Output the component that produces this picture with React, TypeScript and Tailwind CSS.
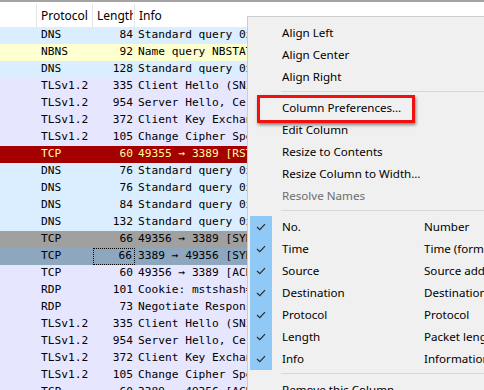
import React from 'react';

interface Packet {
  proto: string;
  len: number;
  info: string;
  bg: string;
  fg?: string;
  focus?: boolean;
}

const UDP = 'bg-[#daeeff]';
const TCPC = 'bg-[#e7e6ff]';

const packets: Packet[] = [
  { proto: 'DNS', len: 84, info: 'Standard query 0x4a1e A www.msftconnecttest.com', bg: UDP },
  { proto: 'NBNS', len: 92, info: 'Name query NBSTAT *<00><00><00>', bg: 'bg-[#feffd0]' },
  { proto: 'DNS', len: 128, info: 'Standard query 0x8c2f response', bg: UDP },
  { proto: 'TLSv1.2', len: 335, info: 'Client Hello (SNI=...)', bg: TCPC },
  { proto: 'TLSv1.2', len: 954, info: 'Server Hello, Certificate', bg: TCPC },
  { proto: 'TLSv1.2', len: 372, info: 'Client Key Exchange', bg: TCPC },
  { proto: 'TLSv1.2', len: 105, info: 'Change Cipher Spec', bg: TCPC },
  { proto: 'TCP', len: 60, info: '49355 → 3389 [RST, ACK]', bg: 'bg-[#a40000]', fg: 'text-[#fffc9c]' },
  { proto: 'DNS', len: 76, info: 'Standard query 0x1b2c A', bg: UDP },
  { proto: 'DNS', len: 76, info: 'Standard query 0x7d3e AAAA', bg: UDP },
  { proto: 'DNS', len: 84, info: 'Standard query 0x51aa', bg: UDP },
  { proto: 'DNS', len: 132, info: 'Standard query 0x51aa response', bg: UDP },
  { proto: 'TCP', len: 66, info: '49356 → 3389 [SYN]', bg: 'bg-[#a0a0a0]' },
  { proto: 'TCP', len: 66, info: '3389 → 49356 [SYN, ACK]', bg: 'bg-[#8da7bf]', focus: true },
  { proto: 'TCP', len: 60, info: '49356 → 3389 [ACK]', bg: TCPC },
  { proto: 'RDP', len: 101, info: 'Cookie: mstshash=admin', bg: TCPC },
  { proto: 'RDP', len: 73, info: 'Negotiate Response', bg: TCPC },
  { proto: 'TLSv1.2', len: 335, info: 'Client Hello (SNI=...)', bg: TCPC },
  { proto: 'TLSv1.2', len: 954, info: 'Server Hello, Certificate', bg: TCPC },
  { proto: 'TLSv1.2', len: 372, info: 'Client Key Exchange', bg: TCPC },
  { proto: 'TLSv1.2', len: 105, info: 'Change Cipher Spec', bg: TCPC },
  { proto: 'TCP', len: 60, info: '3389 → 49356 [ACK]', bg: TCPC },
];

const columns = [
  { label: 'No.', title: 'Number' },
  { label: 'Time', title: 'Time (format as specified)' },
  { label: 'Source', title: 'Source address' },
  { label: 'Destination', title: 'Destination address' },
  { label: 'Protocol', title: 'Protocol' },
  { label: 'Length', title: 'Packet length (bytes)' },
  { label: 'Info', title: 'Information' },
];

const mono = { fontFamily: '"DejaVu Sans Mono", "Liberation Mono", monospace' };
const ui = { fontFamily: '"Noto Sans", sans-serif' };

function Check() {
  return (
    <svg width="10" height="8" viewBox="0 0 10 8" fill="none">
      <path d="M1 4 L3.8 6.6 L9 1.2" stroke="#2b2b2b" strokeWidth="1.2" />
    </svg>
  );
}

function MenuItem({ label, disabled }: { label: string; disabled?: boolean }) {
  return (
    <div className="flex h-[22px] items-center">
      <div className="w-[22px] h-full shrink-0" />
      <span className={`ml-[10px] whitespace-nowrap ${disabled ? 'text-[#6d6d6d]' : 'text-black'}`}>{label}</span>
    </div>
  );
}

function Separator() {
  return (
    <div className="h-[9px] pl-[31px] pt-[3px]">
      <div className="h-px bg-[#d7d7d7]" />
    </div>
  );
}

export default function App() {
  return (
    <div className="relative w-[484px] h-[390px] overflow-hidden bg-white">
      <div className="h-[2px] bg-[#a3a3a3]" />
      {/* header */}
      <div className="flex h-[25px] pt-[2px] text-[12px] text-black" style={ui}>
        <div className="w-[37px] border-r border-[#e5e5e5]" />
        <div className="w-[56px] border-r border-[#e5e5e5] pl-[4px] flex items-center overflow-hidden whitespace-nowrap">Protocol</div>
        <div className="w-[42px] border-r border-[#e5e5e5] pl-[4px] pr-[1px] flex items-center overflow-hidden whitespace-nowrap">
          <span className="overflow-hidden">Length</span>
        </div>
        <div className="flex-1 pl-[4px] flex items-center">Info</div>
      </div>
      {/* rows */}
      <div className="text-[11.2px]" style={mono}>
        {packets.map((p, i) => (
          <div key={i} className={`flex h-[17px] items-center ${p.bg} ${p.fg ?? 'text-black'}`}>
            <div className="w-[37px] shrink-0" />
            <div className="w-[56px] shrink-0 pl-[4px] whitespace-nowrap">{p.proto}</div>
            <div className={`w-[42px] shrink-0 h-full flex items-center justify-end pr-[2px] ${p.focus ? 'border border-dotted border-black' : ''}`}>{p.len}</div>
            <div className="flex-1 pl-[3px] whitespace-nowrap overflow-hidden">{p.info}</div>
          </div>
        ))}
      </div>

      {/* context menu */}
      <div className="absolute left-[247px] top-[16px] w-[280px] h-[400px] overflow-hidden bg-[#f0f0f0] border border-[#cccccc] pt-[5px] pl-[2px] text-[11.6px]" style={ui}>
        <MenuItem label="Align Left" />
        <MenuItem label="Align Center" />
        <MenuItem label="Align Right" />
        <Separator />
        <MenuItem label="Column Preferences…" />
        <MenuItem label="Edit Column" />
        <MenuItem label="Resize to Contents" />
        <MenuItem label="Resize Column to Width…" />
        <MenuItem label="Resolve Names" disabled />
        <Separator />
        {columns.map((c) => (
          <div key={c.label} className="flex h-[22px] items-center">
            <div className="w-[22px] h-full shrink-0 bg-[#90c8f6] flex items-center justify-center">
              <Check />
            </div>
            <span className="ml-[10px] w-[142px] shrink-0 whitespace-nowrap">{c.label}</span>
            <span className="whitespace-nowrap">{c.title}</span>
          </div>
        ))}
        <Separator />
        <MenuItem label="Remove this Column" />
      </div>

      {/* annotation */}
      <div className="absolute left-[257px] top-[95px] w-[158px] h-[28px] border-[3px] border-[#f01010] shadow-[1px_2px_3px_rgba(0,0,0,0.45)]" />
    </div>
  );
}
